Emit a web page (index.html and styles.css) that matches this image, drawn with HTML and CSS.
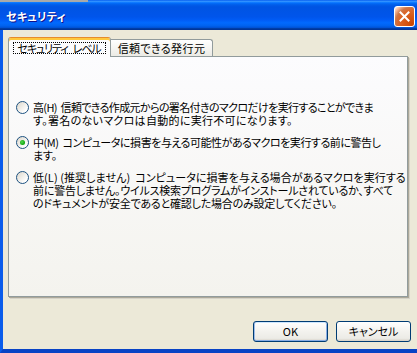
FILE: index.html
```html
<!DOCTYPE html>
<html lang="ja">
<head>
<meta charset="utf-8">
<title>セキュリティ</title>
<link rel="stylesheet" href="styles.css">
</head>
<body>
<div class="window">
  <div class="titlebar">
    <span class="title">セキュリティ</span>
    <span class="close">
      <svg width="13" height="13" viewBox="0 0 13 13"><path d="M2.5 2.5 L10.5 10.5 M10.5 2.5 L2.5 10.5" stroke="#fff" stroke-width="2" stroke-linecap="square" fill="none"/></svg>
    </span>
  </div>
  <div class="frame">
    <div class="tabs">
      <div class="tab active"><span class="focus">セキュリティ<span class="gap"></span>レベル</span></div>
      <div class="tab second">信頼できる発行元</div>
    </div>
    <div class="panel">
      <div class="options">
        <div class="opt">
          <span class="radio"></span>
          <div class="text">
            <span class="line tight">高(H)&nbsp;&nbsp;信頼できる作成元からの署名付きのマクロだけを実行することができま</span>
            <span class="line loose">す。署名のないマクロは自動的に実行不可になります。</span>
          </div>
        </div>
        <div class="opt">
          <span class="radio checked"></span>
          <div class="text">
            <span class="line snug">中(M)&nbsp;&nbsp;コンピュータに損害を与える可能性があるマクロを実行する前に警告し</span>
            <span class="line">ます。</span>
          </div>
        </div>
        <div class="opt">
          <span class="radio"></span>
          <div class="text">
            <span class="line open">低(L)&nbsp;(推奨しません)&nbsp;&nbsp;コンピュータに損害を与える場合があるマクロを実行する</span>
            <span class="line">前に警告しません。ウイルス検索プログラムがインストールされているか、すべて</span>
            <span class="line">のドキュメントが安全であると確認した場合のみ設定してください。</span>
          </div>
        </div>
      </div>
    </div>
    <div class="buttons">
      <span class="btn default">OK</span>
      <span class="btn">キャンセル</span>
    </div>
  </div>
</div>
</body>
</html>
```
FILE: styles.css
```css
html, body {
  margin: 0;
  padding: 0;
}
body {
  width: 417px;
  height: 353px;
  overflow: hidden;
  background: #ECE9D8;
  font-family: "Noto Sans CJK JP", sans-serif;
  font-size: 11px;
  color: #000;
}
.window {
  position: relative;
  width: 417px;
  height: 353px;
  display: flex;
  flex-direction: column;
}
.window::before {
  content: "";
  position: absolute;
  left: 0;
  top: 0;
  width: 88px;
  height: 2px;
  background: #A9A9A9;
}
.titlebar {
  height: 30px;
  box-sizing: border-box;
  flex: none;
  display: flex;
  align-items: center;
  justify-content: space-between;
  padding: 2px 2px 0 6px;
  background: linear-gradient(to bottom, #0058EE 0%, #3593FF 4%, #288EFF 6%, #127DFF 8%, #036FFC 10%, #0262EE 14%, #0057E5 20%, #0054E3 24%, #0055EB 56%, #005BF5 66%, #026AFE 76%, #0062EF 86%, #0052D6 92%, #0040AB 94%, #003092 100%);
}
.title {
  color: #fff;
  font-weight: bold;
  font-size: 11px;
  letter-spacing: 0.3px;
  text-shadow: 1px 1px #0F1089;
  font-feature-settings: "palt";
}
.close {
  width: 21px;
  height: 21px;
  box-sizing: border-box;
  border: 1px solid #fff;
  border-radius: 3px;
  display: flex;
  align-items: center;
  justify-content: center;
  background: radial-gradient(circle at 90% 90%, #CC4600 0%, #DC6527 55%, #CD7546 70%, #FFCCB2 90%, #fff 100%);
}
.close svg {
  display: block;
}
.frame {
  flex: 1;
  display: flex;
  flex-direction: column;
  border-left: 3px solid #0A5CEB;
  border-bottom: 4px solid #0843C5;
}
.tabs {
  display: flex;
  align-items: flex-end;
  height: 19px;
  padding: 7px 0 0 5px;
}
.tab {
  box-sizing: border-box;
  height: 17px;
  width: 102px;
  border: 1px solid #919B9C;
  border-bottom: none;
  border-left: none;
  border-radius: 0 3px 0 0;
  background: linear-gradient(to bottom, #FFFFFF, #ECEBE5);
  display: flex;
  align-items: center;
  justify-content: center;
  line-height: 13px;
  white-space: nowrap;
  font-feature-settings: "palt";
}
.tab.second {
  letter-spacing: 0.4px;
}
.tab.active {
  position: relative;
  z-index: 1;
  width: 103px;
  height: 20px;
  margin-bottom: -1px;
  border-left: 1px solid #919B9C;
  border-top: 1px solid #E68B2C;
  border-radius: 3px 3px 0 0;
  background: #FCFCFE;
  box-shadow: inset 0 2px 0 #FFC83C;
  padding-top: 1px;
  letter-spacing: -1.1px;
}
.gap {
  display: inline-block;
  width: 5px;
}
.focus {
  border: 1px dotted #000;
  padding: 0 4px 0 3px;
  line-height: 10px;
  height: 10px;
  display: inline-flex;
  align-items: center;
}
.panel {
  box-sizing: border-box;
  height: 241px;
  margin: 0 9px 0 5px;
  border: 1px solid #919B9C;
  background: linear-gradient(to bottom, #FCFCFE, #F4F3EE);
  box-shadow: 1px 1px 0 #ACA899, 2px 2px 0 #D6D3C8;
}
.options {
  display: flex;
  flex-direction: column;
  gap: 9px;
  padding: 44px 0 0 7px;
}
.opt {
  display: flex;
  align-items: flex-start;
  gap: 4px;
}
.radio {
  flex: none;
  width: 13px;
  height: 13px;
  box-sizing: border-box;
  border: 1px solid #1C5180;
  border-radius: 50%;
  background: linear-gradient(135deg, #DCD7CB 0%, #FFFFFF 80%);
  display: flex;
  align-items: center;
  justify-content: center;
}
.radio.checked::after {
  content: "";
  width: 5px;
  height: 5px;
  border-radius: 50%;
  background: radial-gradient(circle at 40% 40%, #55D551, #009E00 80%);
}
.text {
  display: flex;
  flex-direction: column;
}
.line {
  display: block;
  line-height: 13px;
  white-space: nowrap;
  letter-spacing: -0.2px;
  font-feature-settings: "palt";
}
.line.tight {
  letter-spacing: -0.63px;
}
.line.snug {
  letter-spacing: -0.46px;
}
.line.open {
  letter-spacing: 0.07px;
}
.line.loose {
  letter-spacing: 0.3px;
}
.buttons {
  display: flex;
  justify-content: flex-end;
  gap: 8px;
  padding: 0 6px 0 0;
  margin-top: 24px;
}
.btn {
  box-sizing: border-box;
  width: 75px;
  height: 21px;
  border: 1px solid #003C74;
  border-radius: 3px;
  background: linear-gradient(to bottom, #FFFFFF 0%, #F3F2EE 50%, #ECEBE6 86%, #D6D0C5 100%);
  display: flex;
  align-items: center;
  justify-content: center;
  line-height: 13px;
  font-feature-settings: "palt";
}
.btn.default {
  box-shadow: inset 0 -1px 0 #89ADE4, inset 1px 0 0 #9DBCE9, inset 0 1px 0 #CEE7FF, inset -1px 0 0 #89ADE4;
}
```
